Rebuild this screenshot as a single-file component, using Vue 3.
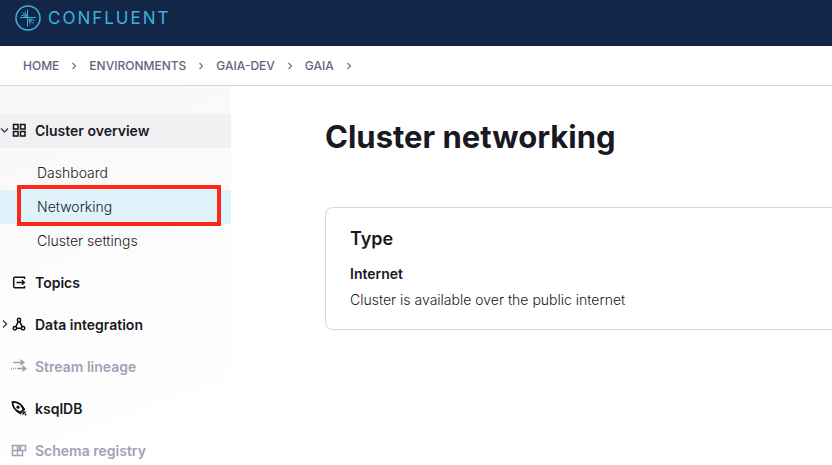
<script setup>
const crumbs = ['Home', 'Environments', 'Gaia-dev', 'Gaia']

const clusterPages = [
  { label: 'Dashboard' },
  { label: 'Networking', active: true },
  { label: 'Cluster settings' },
]

const sections = [
  { label: 'Topics', icon: 'topics' },
  { label: 'Data integration', icon: 'integration', expandable: true },
  { label: 'Stream lineage', icon: 'lineage', muted: true },
  { label: 'ksqlDB', icon: 'rocket' },
  { label: 'Schema registry', icon: 'schema', muted: true },
]
</script>

<template>
  <div class="page">
    <header class="topbar">
      <a class="brand" href="#">
        <svg class="brand-mark" viewBox="0 0 26 26" aria-hidden="true">
          <circle cx="13" cy="13" r="12" />
          <path d="M12.500 4.500v17M5 12.500h16M11.500 11.500 7.500 7.500M11.500 11 10 6.500M11 11.500 6.500 10M14 14l4.500 4.500M14 14.500l1.500 5M14.500 14l5 1.500" />
        </svg>
        <span class="wordmark">CONFLUENT</span>
      </a>
    </header>

    <nav class="crumbs" aria-label="Breadcrumb">
      <template v-for="crumb in crumbs" :key="crumb">
        <a href="#">{{ crumb }}</a>
        <svg class="separator" viewBox="0 0 6 8" aria-hidden="true"><path d="M1.500 1 4.500 4 1.500 7" /></svg>
      </template>
    </nav>

    <div class="body">
      <nav class="sidebar" aria-label="Cluster">
        <a class="row overview" href="#">
          <svg class="caret" viewBox="0 0 9 10" aria-hidden="true"><path d="M1 3.500 4.500 7 8 3.500" /></svg>
          <svg class="icon" viewBox="0 0 16 16" aria-hidden="true">
            <path d="M2.500 2.500h4.500v4.500h-4.500zM9.500 2.500h4.500v4.500h-4.500zM2.500 9.500h4.500v4.500h-4.500zM9.500 9.500h4.500v4.500h-4.500z" />
          </svg>
          <span>Cluster overview</span>
        </a>

        <ul class="pages">
          <li v-for="page in clusterPages" :key="page.label" :class="{ active: page.active }">
            <a href="#">{{ page.label }}</a>
            <span v-if="page.active" class="highlight"></span>
          </li>
        </ul>

        <a v-for="s in sections" :key="s.label" class="row" :class="{ muted: s.muted }" href="#">
          <svg class="caret" viewBox="0 0 9 10" aria-hidden="true">
            <path v-if="s.expandable" d="M3 1.500 6.500 5 3 8.500" />
          </svg>
          <svg class="icon" :class="s.icon" viewBox="0 0 16 16" aria-hidden="true">
            <path v-if="s.icon === 'topics'" d="M13.500 5V3.200H4Q2.700 3.200 2.700 4.500v8q0 1.300 1.300 1.300h9.500V12M5.500 8.500h8M11 6.200 13.300 8.500 11 10.800" />
            <template v-else-if="s.icon === 'integration'">
              <circle cx="8" cy="4" r="1.700" />
              <circle cx="3.900" cy="12.300" r="1.700" />
              <circle cx="12.100" cy="12.300" r="1.700" />
              <path d="M7.300 5.600 4.700 10.800M8.700 5.600l2.600 5.200M5.600 12.300h4.800" />
            </template>
            <template v-else-if="s.icon === 'lineage'">
              <path d="M2 4.500h9M6 10.500h7M0 10.500h1M2 10.500h1M4 10.500h1" />
              <path class="solid" d="M9.500 1 14 4.500l-4.500 3.500zM11.500 7l4.500 3.500-4.500 3.500z" />
            </template>
            <template v-else-if="s.icon === 'rocket'">
              <path d="M1.500 1.800Q7.500 2 10.500 5.500L12.500 9.500 9.500 12.500 5.500 10.500Q1.500 7.500 1.500 1.800z" />
              <path d="M10.500 5.500 13.300 9.300l-1 1.200M5.300 10.500l4 2.800 1-1M11.700 11.700l1.800 1.800M14 11.500v1.300M11.300 14h1.300M14 14l1.200 1.200" />
              <circle class="solid" cx="7" cy="7.200" r="1.600" />
            </template>
            <path v-else d="M1.500 3.500h5v5h-5zM6.500 3.500h2v5M1.500 8.500v5h10v-5h-10M6.500 8.500v5M9.500 3.500h5v5h-5z" />
          </svg>
          <span>{{ s.label }}</span>
        </a>
      </nav>

      <main class="content">
        <h1>Cluster networking</h1>
        <section class="card">
          <h2>Type</h2>
          <h3>Internet</h3>
          <p>Cluster is available over the public internet</p>
        </section>
      </main>
    </div>
  </div>
</template>

<style>
body {
  background: #fff;
  overflow: hidden;
}
</style>

<style scoped>
.page {
  display: flex;
  flex-direction: column;
  height: 100vh;
  font-family: Inter, "Liberation Sans", sans-serif;
  font-size: 14px;
  color: #191924;
}

a {
  color: inherit;
  text-decoration: none;
}

svg {
  flex: none;
  fill: none;
  stroke: currentColor;
}

.topbar {
  flex: none;
  height: 46px;
  padding: 5px 15px 0;
  box-sizing: border-box;
  background: #142647;
}

.brand {
  display: flex;
  align-items: center;
  gap: 7px;
  height: 26px;
  color: #38b5dc;
}

.brand-mark {
  width: 26px;
  height: 26px;
  stroke-width: 1.5;
}

.brand-mark path {
  stroke-width: 1;
}

.wordmark {
  font-size: 17px;
  font-weight: 400;
  letter-spacing: 2px;
}

.crumbs {
  flex: none;
  display: flex;
  align-items: center;
  gap: 12px;
  height: 39px;
  padding: 0 23px;
  border-bottom: 1px solid #d8d8e2;
  color: #65637f;
  font-size: 12px;
  font-weight: 500;
  text-transform: uppercase;
}

.separator {
  width: 6px;
  height: 8px;
  color: #77758f;
  stroke-width: 1.2;
}

.body {
  flex: 1;
  display: flex;
  min-height: 0;
}

.sidebar {
  flex: none;
  width: 231px;
  padding-top: 28px;
  box-sizing: border-box;
  background: linear-gradient(160deg, #f7f7f9, #fdfdfd 55%, #fff);
}

.row {
  display: flex;
  align-items: center;
  box-sizing: border-box;
  height: 34px;
  margin-bottom: 8px;
  padding-bottom: 2px;
  font-weight: 600;
}

.overview {
  background: #f1f1f4;
}

.caret {
  width: 9px;
  height: 10px;
  color: #3f3d5c;
  stroke-width: 1.4;
}

.icon {
  width: 16px;
  height: 16px;
  margin: 0 8px 0 2px;
  color: #111;
  stroke-width: 1.5;
}

.rocket {
  stroke-width: 1.7;
}

.solid {
  fill: currentColor;
  stroke: none;
}

.muted,
.muted .icon {
  color: #a3a1b5;
}

.pages {
  margin: 0 0 8px;
  padding: 0;
  list-style: none;
}

.pages li {
  position: relative;
  padding-left: 37px;
  line-height: 34px;
  font-weight: 300;
}

.pages .active {
  background: #e0f3fa;
}

.highlight {
  position: absolute;
  inset: -5px 10px -2px 17px;
  border: 4px solid #fb2718;
}

.content {
  flex: 1;
  min-width: 0;
  padding: 31px 0 0 94px;
}

h1,
h2,
h3,
p {
  margin: 0;
}

h1 {
  font-size: 31px;
  line-height: 40px;
  font-weight: 700;
}

.card {
  margin-top: 50px;
  padding: 18px 24px 17px;
  border: 1px solid #d8d8e2;
  border-right: 0;
  border-radius: 8px 0 0 8px;
}

h2 {
  font-size: 18px;
  line-height: 26px;
  font-weight: 600;
}

h3 {
  margin-top: 10px;
  font-size: 14px;
  line-height: 24px;
  font-weight: 600;
}

p {
  margin-top: 2px;
  line-height: 24px;
  font-weight: 300;
}
</style>
